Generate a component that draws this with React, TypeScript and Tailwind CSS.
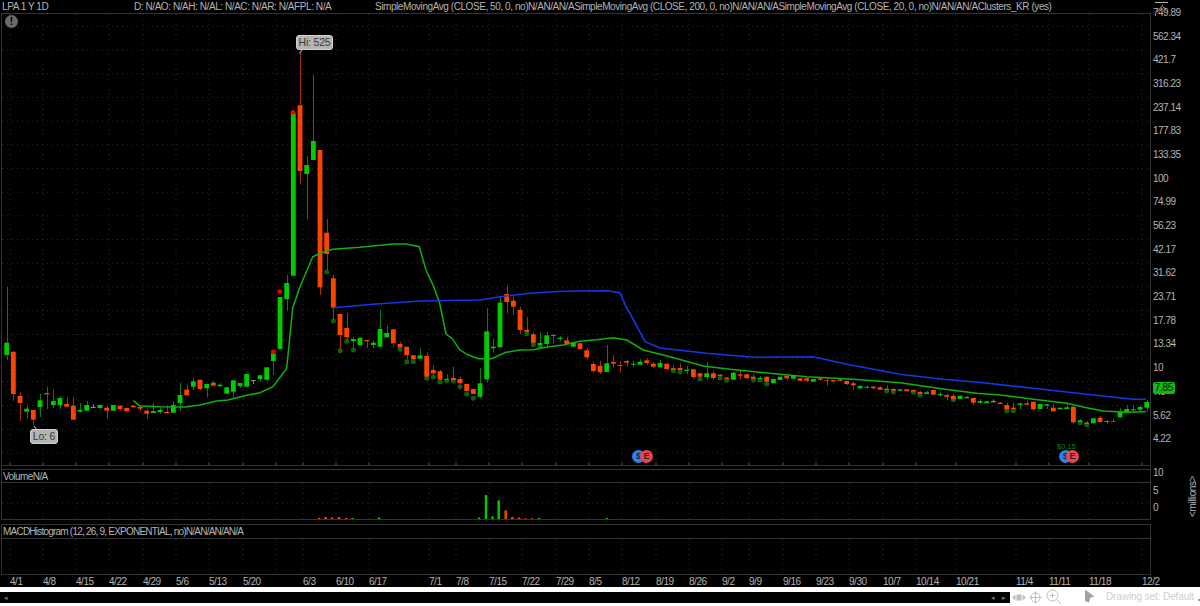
import { Fragment } from 'react'

type Tone = 'g' | 'r' | 'n'
type Candle = [Tone, number, number, number, number, number?]

// body top, body bottom, wick top, wick bottom, optional dark dot (page px)
const CANDLES: Candle[] = [
  ['g', 342.7, 355, 286.7, 360], ['r', 351.7, 394, 351.7, 400.7], ['r', 396, 403, 392.7, 421], ['g', 408.7, 411.7, 406, 418.3],
  ['r', 410, 419.7, 410, 425], ['g', 400.3, 407, 394, 417], ['r', 393, 394.3, 386.7, 409], ['g', 401, 405, 390, 408.3],
  ['g', 398, 405, 396, 409.3], ['r', 404, 406.7, 397.7, 407], ['r', 405.7, 419.7, 396.7, 419.7], ['g', 410, 411.7, 403, 411.7],
  ['g', 405, 410.7, 401, 410.7], ['n', 407, 408, 404.3, 408], ['g', 405, 408, 405, 409.3], ['r', 407.7, 410.7, 406, 418.3],
  ['g', 405, 410.7, 405, 410.7], ['r', 405.7, 409, 405.7, 410.7], ['r', 408, 411.3, 408, 411.3], ['r', 405.7, 407.3, 405.7, 407.3],
  ['r', 407, 408.7, 405.3, 411.3], ['r', 410.7, 413.7, 409.3, 419], ['g', 411, 413, 403, 413], ['g', 410, 412, 407.3, 414],
  ['r', 412, 413.3, 405.3, 413.3], ['g', 405, 412.7, 401.3, 412.7], ['g', 395, 403, 382.7, 410.7], ['r', 389.7, 395.3, 384.7, 395.3],
  ['g', 381.3, 386.7, 378.3, 390], ['r', 379.7, 389, 379.7, 390.3], ['g', 384, 388.3, 384, 397.3], ['r', 382.7, 385.7, 381, 385.7],
  ['g', 384.7, 386.3, 382.7, 386.3], ['g', 387.3, 393.7, 387.3, 393.7], ['g', 380.3, 391.7, 380.3, 398], ['g', 383, 386, 383, 388],
  ['g', 374, 386.7, 374, 386.7], ['n', 380, 381, 380, 384], ['g', 375.3, 379, 375.3, 381.7], ['g', 367.3, 379.7, 367.3, 380.7],
  ['g', 353.7, 361, 353.7, 375], ['g', 297, 349, 297, 349], ['g', 283, 299.3, 275, 310.7], ['g', 113.3, 275.7, 113.3, 275.7],
  ['r', 105.3, 171, 53.3, 184.3], ['g', 165, 174, 156, 219.3], ['g', 141, 160, 75, 141], ['r', 150, 287.3, 150, 295],
  ['r', 232.7, 254, 219, 270, 272], ['r', 278.3, 307.7, 275, 319, 321], ['r', 314, 335, 314, 350, 350.7], ['r', 328, 337.3, 313.3, 340, 341.3],
  ['g', 339, 341, 337, 348, 350], ['g', 337.7, 345.3, 337.7, 345.3], ['r', 340, 341.3, 340, 348], ['g', 342.7, 345, 340.7, 348],
  ['g', 329, 346.7, 310, 346.7], ['g', 333, 337.3, 325.7, 337.3], ['r', 329.3, 343.3, 329.3, 345.7], ['r', 344, 347.3, 341.7, 347.3, 349.3],
  ['r', 346.7, 355, 346.7, 359, 361.7], ['r', 355.3, 359.3, 355.3, 359.3, 361.7], ['g', 355.3, 358.7, 348.3, 358.7], ['r', 356, 376.7, 352.3, 376.7, 378.3],
  ['r', 370, 373.3, 365, 375, 377], ['r', 371.3, 379.7, 370, 379.7, 382], ['r', 379, 380, 374, 380, 380.7], ['r', 378, 380, 366.7, 380, 380.7],
  ['r', 379, 383.3, 376.7, 383.3, 386.7], ['r', 384, 391, 384, 391, 394], ['r', 389, 394, 389, 394, 398.3], ['g', 383.3, 396.7, 368.3, 398.3],
  ['g', 331.3, 379.3, 308.3, 382.7], ['g', 346.7, 348.3, 338.3, 352.7], ['g', 302.7, 347.3, 296.7, 347.3], ['r', 294, 302, 285.7, 313.3],
  ['r', 300.7, 306.7, 296.7, 315], ['r', 310, 330, 306.7, 334], ['r', 330, 331.7, 316.7, 333, 333.7], ['r', 334.3, 342.7, 332.3, 345, 344.7],
  ['g', 343, 345, 331.7, 348.3, 346.3], ['g', 335.3, 344, 332, 347.3], ['r', 335, 336, 334, 343.3], ['g', 337.7, 339, 336, 341.3],
  ['r', 340.3, 344, 336.7, 344], ['g', 342.3, 346.7, 342.3, 346.7], ['r', 343.3, 349, 343.3, 350], ['r', 350.3, 357.3, 348.3, 359.3],
  ['r', 364, 371, 361.7, 372.7], ['r', 365.7, 372.3, 360.7, 374], ['g', 363.3, 372, 345, 372], ['r', 362, 363.7, 355.3, 367.3],
  ['r', 365, 366, 361, 372.7], ['r', 361, 362.7, 360, 366.7], ['g', 363.7, 364.7, 361, 367.3], ['g', 361.7, 364.7, 359, 365],
  ['r', 360.3, 363, 358.3, 364.7], ['r', 363.7, 366.7, 362, 367.7], ['g', 363, 367.3, 360, 367.3], ['r', 363.7, 369, 363.7, 370.3],
  ['r', 368.3, 370, 365, 370, 370.7], ['r', 368, 370, 363.3, 370, 372], ['g', 369.7, 371, 366, 374.3], ['r', 369.3, 377, 369.3, 378.7],
  ['r', 373.3, 376.7, 373.3, 377, 379], ['g', 373.3, 377, 362, 380], ['r', 373.3, 378, 371, 380], ['r', 374.7, 376, 374, 376, 378],
  ['r', 377.7, 379, 377, 379, 380.3], ['g', 372.7, 379.7, 371.7, 379.7], ['r', 374.3, 375.7, 371, 379], ['r', 374.3, 378.3, 374.3, 378.3],
  ['r', 376.7, 378.7, 374.3, 378.7, 380], ['g', 378, 379, 376, 379, 380], ['r', 376.7, 381.7, 376.7, 381.7, 384], ['g', 379, 383.3, 379, 383.3],
  ['g', 376.7, 380, 376.7, 380], ['r', 375.7, 378.3, 375.7, 380], ['g', 376, 378.7, 376, 380], ['r', 378.3, 380.7, 378.3, 381.7],
  ['r', 378.3, 380.7, 377.7, 382], ['g', 379, 381.7, 379, 381.7], ['r', 378.3, 379.7, 378.3, 381.3], ['r', 380.3, 381, 379, 385.7],
  ['r', 380, 381.3, 380, 383.3], ['r', 379.3, 380.7, 379.3, 381.7], ['r', 381, 384, 381, 385], ['r', 383.3, 385.3, 381.7, 390],
  ['g', 386, 388.3, 385, 389.3], ['g', 386.7, 387.7, 385.3, 388.7], ['r', 386.7, 388.3, 385.7, 389], ['r', 387.3, 389.7, 386.3, 390],
  ['r', 388.7, 390, 385, 390, 391], ['r', 389, 390.7, 388, 390.7, 392], ['g', 389.3, 390.7, 389, 390.7], ['r', 389.3, 391.3, 389, 391.3],
  ['r', 390, 391.5, 389.5, 391.5, 392.3], ['r', 392, 394, 391, 394, 395], ['g', 392.3, 394, 391, 394], ['r', 390, 394.7, 390, 394.7],
  ['g', 394, 395.3, 392.3, 396.7], ['r', 395, 396.7, 393.3, 400], ['r', 396, 399.3, 394, 399.3, 399.7], ['g', 395.7, 399, 395.7, 399],
  ['g', 397, 398.3, 396, 398.3], ['r', 398, 402.7, 397.5, 405], ['g', 401, 402.7, 399, 404], ['g', 401.3, 403.3, 401.3, 403.3],
  ['n', 401, 402.3, 399.3, 402.3], ['r', 402.7, 404, 402, 404], ['r', 405, 409.3, 402.7, 409.3, 410.7], ['r', 407.7, 409, 402.7, 409, 410.7],
  ['g', 403.3, 404.7, 403.3, 409], ['r', 403.3, 404.7, 400.7, 404.7], ['r', 401.7, 409.3, 401.7, 410.7], ['g', 404, 409, 404, 409],
  ['g', 404.3, 405.7, 404.3, 409], ['r', 407.7, 411.3, 404.3, 411.3], ['g', 407.7, 409.3, 407.7, 409.3], ['g', 407.3, 409, 402.7, 409],
  ['r', 406.7, 422.3, 406.7, 423.7], ['g', 420.5, 422, 419.3, 422, 422.7], ['r', 422.7, 424, 421, 424, 424.7], ['g', 418.3, 423.3, 418.3, 423.3],
  ['r', 417.7, 422, 416, 422], ['g', 421, 422, 420, 424], ['r', 421.3, 422, 418.3, 422], ['g', 412, 417.3, 407.7, 417.3],
  ['g', 409, 412.3, 405, 412.3], ['g', 409.3, 410.3, 405, 411.7], ['g', 407, 409.7, 405, 411.7], ['g', 402, 407.7, 400, 411.7],
]

const RED_DOTS = [[273.3, 352], [279.7, 291.7], [293, 112.3]]

const GREEN_LINE = '133.3,400.7 140,406 160,406.7 185,407 200,405 216.7,401 228,400 246.7,395.3 260,392.7 273,386.7 286.7,368.3 292.7,308 300,286.7 312.7,256.7 326.7,250.7 333,249.3 360,247.3 393,244 406,244 419.3,246.7 426,270 433,285 439.3,301.7 446,334 452.7,339 459.3,349.3 466.7,354.3 478.3,358.7 491.7,358.7 506,352.3 520,350 533.3,349.7 546.7,347 563.3,345 580,341.3 596.7,339.7 613.3,337.7 626.7,340 643.3,350 670,356.7 703.3,366 730,369.3 760,372.3 806.7,376.7 853.3,379.3 900,382.7 943.3,389 976.7,393.3 1000,395 1033.3,399.3 1066.7,403.3 1086.7,407.7 1103.3,411 1126.7,412.3 1146,411.7'
const BLUE_LINE = '333.3,307.7 373,304.3 420,301 480,300 500,296.7 530,293.3 563.3,291.3 606.7,290.7 620,292.7 626.7,308.3 630,313.3 645,341.7 660,348 706.7,353.3 753,357.3 813.3,356.7 846.7,364.3 900,374.3 943,379.3 983,382.7 1033,388.3 1086.7,394.3 1133,399.3 1146,399.3'

const VOLUME_BARS: [number, number, Tone][] = [
  [319, 1, 'r'], [325.7, 2, 'r'], [332, 1.5, 'r'], [339, 2, 'r'], [346, 1, 'r'], [352.5, 1, 'g'], [379, 1.5, 'g'],
  [479, 1.5, 'g'], [486, 24, 'g'], [492.5, 2.5, 'g'], [498.7, 18.7, 'g'], [505.7, 8.7, 'r'], [512.3, 2, 'r'], [519, 1.5, 'r'],
  [525.7, 0.7, 'r'], [532.3, 0.7, 'r'], [539, 1, 'g'], [606.7, 1, 'g'],
]

const DATES: [string, number][] = [
  ['4/1', 10], ['4/8', 43], ['4/15', 76], ['4/22', 109], ['4/29', 143], ['5/6', 176], ['5/13', 209], ['5/20', 243],
  ['6/3', 303], ['6/10', 336], ['6/17', 369], ['7/1', 429], ['7/8', 456], ['7/15', 489], ['7/22', 522], ['7/29', 556],
  ['8/5', 589], ['8/12', 622], ['8/19', 656], ['8/26', 689], ['9/2', 722], ['9/9', 749], ['9/16', 783], ['9/23', 816],
  ['9/30', 849], ['10/7', 883], ['10/14', 916], ['10/21', 956], ['11/4', 1016], ['11/11', 1049], ['11/18', 1089], ['12/2', 1142],
]

const GRID_X = [...DATES.map((d) => d[1]), 276]
const GRID_Y = Array.from({ length: 19 }, (_, i) => 26.3 + i * 23.7)
const PRICES = ['749.89', '562.34', '421.7', '316.23', '237.14', '177.83', '133.35', '100', '74.99', '56.23', '42.17', '31.62', '23.71', '17.78', '13.34', '10', '7.5', '5.62', '4.22']

const candleX = (i: number) => 6.67 + i * 6.667

const DottedGrid = ({ top, bottom, ys }: { top: number; bottom: number; ys: number[] }) => (
  <g stroke="#2b2b2b" strokeWidth="1" strokeDasharray="1 4">
    {GRID_X.map((x) => <line key={x} x1={x} x2={x} y1={top} y2={bottom} />)}
    {ys.map((y) => <line key={y} x1={2} x2={1150} y1={y} y2={y} />)}
  </g>
)

const BottomTicks = ({ y }: { y: number }) => (
  <g stroke="#4a4a4a" strokeWidth="1">
    {GRID_X.map((x) => <line key={x} x1={x} x2={x} y1={y - 3} y2={y} />)}
  </g>
)

const PriceChart = () => (
  <svg width="1150" height="452" viewBox="0 13 1150 452" className="block">
    <DottedGrid top={14} bottom={465} ys={GRID_Y} />
    <BottomTicks y={465} />
    {CANDLES.map(([tone, top, bottom, wickTop, wickBottom, dot], i) => {
      const x = candleX(i)
      const body = tone === 'g' ? '#00cc00' : tone === 'r' ? '#ff4400' : '#8a8a8a'
      const wick = tone === 'g' ? '#0a800a' : tone === 'r' ? '#a5300c' : '#8a8a8a'
      const wickX = Math.round(x) + 0.5
      return (
        <Fragment key={i}>
          {dot !== undefined && <circle cx={x} cy={dot} r="2.5" fill="#0c620c" />}
          <line x1={wickX} x2={wickX} y1={wickTop} y2={wickBottom} stroke={wick} strokeWidth="1" />
          <rect x={x - 2.4} y={top} width="4.8" height={bottom - top} fill={body} />
        </Fragment>
      )
    })}
    {RED_DOTS.map(([x, y]) => <circle key={x} cx={x} cy={y} r="2.4" fill="#f00000" />)}
    <polyline points={GREEN_LINE} fill="none" stroke="#10b010" strokeWidth="1.5" />
    <polyline points={BLUE_LINE} fill="none" stroke="#1238e8" strokeWidth="1.6" />
    <path d="M299.5 53.5 L302 50 M34 426 L37 430" stroke="#a8a8a8" strokeWidth="1.2" />
  </svg>
)

const VolumeChart = () => (
  <svg width="1150" height="37" viewBox="0 482 1150 37" className="block">
    <DottedGrid top={483} bottom={519} ys={[503]} />
    {VOLUME_BARS.map(([x, h, tone]) => (
      <rect key={x} x={x - 1.2} y={519 - h} width="2.4" height={h} fill={tone === 'g' ? '#00cc00' : '#ff4400'} />
    ))}
  </svg>
)

const MacdChart = () => (
  <svg width="1150" height="37" viewBox="0 537 1150 37" className="block">
    <DottedGrid top={538} bottom={574} ys={[]} />
  </svg>
)

const Callout = ({ label, className }: { label: string; className: string }) => (
  <div className={`absolute flex h-[15px] items-center justify-center rounded-[3px] border border-[#d0d0d0] bg-[#b4b4b4] text-[10.5px] tracking-[-0.2px] text-[#3a3a3a] ${className}`}>
    {label}
  </div>
)

const EventBadge = ({ glyph, className }: { glyph: string; className: string }) => (
  <div className={`absolute flex h-[13px] w-[13px] items-center justify-center rounded-full text-[9px] font-bold leading-none text-[#1d2a3a] ${className}`}>
    {glyph}
  </div>
)

export default function App() {
  return (
    <div className="flex h-[606px] w-[1200px] flex-col overflow-hidden bg-black font-['Liberation_Sans',Arial,sans-serif] text-[#b4b4b4]">
      <div className="relative flex h-[587px]">
        <div className="w-[1151px] pl-px">
          <div className="flex h-[14px] items-center border-b border-[#333333] pt-px pl-[1px] text-[10px] leading-none tracking-[-0.43px] whitespace-nowrap">
            <span className="w-[132px]">LPA 1 Y 1D</span>
            <span className="w-[241px]">D: N/AO: N/AH: N/AL: N/AC: N/AR: N/AFPL: N/A</span>
            <span>SimpleMovingAvg (CLOSE, 50, 0, no)N/AN/AN/ASimpleMovingAvg (CLOSE, 200, 0, no)N/AN/AN/ASimpleMovingAvg (CLOSE, 20, 0, no)N/AN/AN/AClusters_KR (yes)</span>
          </div>
          <div className="relative h-[451px] overflow-hidden border-x border-[#333333]">
            <div className="-mt-px -ml-[2px]"><PriceChart /></div>
          </div>
          <div className="h-[17px] border-x border-t border-[#333333]">
            <div className="mt-[3px] flex h-[14px] items-center border-t border-[#333333] pl-[1px] text-[10px] tracking-[-0.6px]">VolumeN/A</div>
          </div>
          <div className="h-[38px] overflow-hidden border-x border-y border-[#333333]">
            <div className="-mt-px -ml-[2px]"><VolumeChart /></div>
          </div>
          <div className="mt-[4px] flex h-[14px] items-center border-x border-t border-[#333333] pl-[1px] text-[10px] tracking-[-0.78px]">
            MACDHistogram (12, 26, 9, EXPONENTIAL, no)N/AN/AN/AN/A
          </div>
          <div className="h-[37px] overflow-hidden border-x border-y border-[#333333]">
            <div className="-mt-px -ml-[2px]"><MacdChart /></div>
          </div>
          <div className="flex h-[13px] items-center pt-px pl-[9px] text-[10px] leading-none tracking-[-0.45px] whitespace-nowrap">
            {DATES.map(([label, x], i) => (
              <span key={label} style={{ width: (DATES[i + 1]?.[1] ?? 1150) - x }}>{label}</span>
            ))}
          </div>
        </div>

        <div className="flex w-[36px] flex-col pl-[2px] text-[10px] leading-none tracking-[-0.5px]">
          {PRICES.map((p) => (
            <div key={p} className="flex h-[23.7px] shrink-0 items-center first:mt-[1px]">{p}</div>
          ))}
          <div className="mt-[13.5px] flex h-[17.5px] items-center">10</div>
          <div className="flex h-[17.5px] items-center">5</div>
          <div className="flex h-[17.5px] items-center">0</div>
        </div>
        <div className="flex flex-1 items-start justify-end pt-[476px] pr-[2px]">
          <span className="rotate-180 text-[10px] leading-none tracking-[-0.4px] [writing-mode:vertical-rl]">&lt;millions&gt;</span>
        </div>

        <div className="absolute top-[15px] left-[5px] flex h-[13px] w-[13px] items-center justify-center rounded-full bg-[#6a6a6a] text-[10px] font-bold leading-none text-black">!</div>
        <Callout label="Hi: 525" className="top-[35px] left-[296px] w-[37px]" />
        <Callout label="Lo: 6" className="top-[429px] left-[30px] w-[28px]" />
        <div className="absolute top-[443px] left-[1057px] text-[7px] leading-none tracking-[0.3px] text-[#0f8a0f]">$0.15</div>
        <EventBadge glyph="$" className="top-[450px] left-[632px] bg-[#2f82e6]" />
        <EventBadge glyph="E" className="top-[450px] left-[640px] bg-[#e8454f]" />
        <EventBadge glyph="$" className="top-[450px] left-[1059px] bg-[#2f82e6]" />
        <EventBadge glyph="E" className="top-[450px] left-[1066px] bg-[#e8454f]" />
        <div className="absolute top-[382px] left-[1153px] flex h-[12px] w-[22px] items-center justify-center rounded-[2px] bg-[#11b811] text-[10px] leading-none tracking-[-0.3px] text-[#041a04]">7.85</div>
        <svg className="absolute top-[1px] left-[1155px]" width="14" height="12" viewBox="0 0 14 12" fill="none" stroke="#b0b0b0" strokeWidth="1">
          <path d="M0 1.5H13" />
          <path d="M2 11L8 4" />
          <path d="M8 6.5C10 6.5 11 8 11 10" />
        </svg>
      </div>

      <div className="flex h-[19px] items-start bg-white pt-[5px]">
        <div className="flex h-[10.5px] w-[1011px] items-center justify-between bg-black pr-[4px] pl-[4px] text-[7px] leading-none text-[#777777]">
          <span>◂</span>
          <span className="flex gap-[7px]"><span>◂</span><span>▸</span></span>
        </div>
        <svg className="mt-[1px] ml-[2px]" width="14" height="9" viewBox="0 0 14 9" fill="#bdbdbd">
          <path d="M0 4.5L3.5 1.5V7.5ZM14 4.5L10.5 1.5V7.5Z" />
          <rect x="4.5" y="1.5" width="5" height="6" />
        </svg>
        <svg className="-mt-[1px] ml-[3px]" width="13" height="13" viewBox="0 0 13 13" fill="none" stroke="#bdbdbd" strokeWidth="1">
          <circle cx="6.5" cy="6.5" r="4.6" />
          <path d="M6.5 0.5V12.5M0.5 6.5H12.5" />
        </svg>
        <svg className="-mt-[3px] ml-[4px]" width="16" height="16" viewBox="0 0 16 16" fill="none" stroke="#bdbdbd" strokeWidth="1">
          <circle cx="6.5" cy="6.5" r="5.5" />
          <path d="M4 6.5H9M6.5 4V9M10.5 10.5L15 15" />
        </svg>
        <svg className="-mt-[3px] ml-[22px]" width="11" height="14" viewBox="0 0 11 14" fill="#a3a3a3">
          <path d="M1 0.5L10.5 7.5L6.5 8.5L5 13.5L1 12Z" />
        </svg>
        <span className="ml-[11px] text-[10px] leading-none tracking-[-0.1px] whitespace-nowrap text-[#cfcfcf]">Drawing set: Default</span>
        <span className="mt-[7px] ml-[4px] h-[2px] w-[2px] bg-[#9a9a9a]" />
      </div>
    </div>
  )
}
